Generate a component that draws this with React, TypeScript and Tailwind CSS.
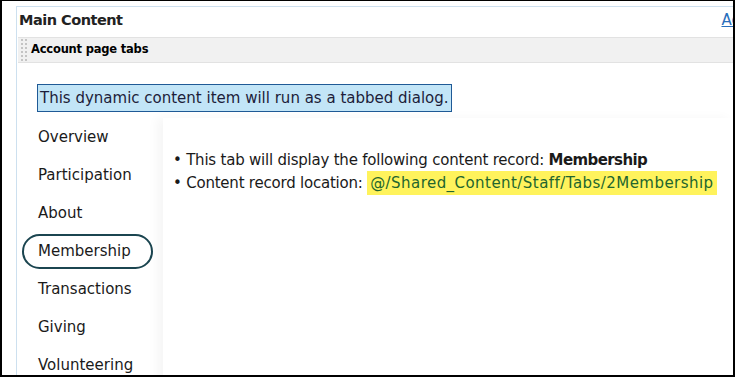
const tabs = ['Overview', 'Participation', 'About', 'Membership', 'Transactions', 'Giving', 'Volunteering'];

function DragHandle() {
  return (
    <div className="grid grid-cols-2 gap-x-[2px] gap-y-[2px] py-[3px]">
      {Array.from({ length: 12 }).map((_, i) => (
        <span key={i} className="block h-[2px] w-[2px] bg-[#c4c4c4]" />
      ))}
    </div>
  );
}

export default function App() {
  return (
    <div className="h-[377px] w-[735px] overflow-hidden border-2 border-t border-black bg-white font-['DejaVu_Sans',sans-serif] text-[#1a1a1a]">
      <div className="ml-[14px] mt-[5px] h-full border-l border-t border-[#cde0ef]">
        <div className="flex h-[30px] items-center justify-between overflow-hidden pb-[3px]">
          <h2 className="pl-[2px] text-[14.5px] font-bold tracking-[-0.5px] text-[#222]">Main Content</h2>
          <a className="mr-[-8px] text-[15px] text-[#2a6ebb] underline">Ad</a>
        </div>
        <div className="ml-px flex h-[26px] items-center gap-[4px] border-y border-[#e2e2e2] bg-[#f1f1f1] pl-[3px]">
          <DragHandle />
          <span className="text-[11.5px] font-bold tracking-[-0.2px] text-black">Account page tabs</span>
        </div>

        <div className="ml-[20px] mt-[21px] inline-block border border-[#1f5a96] bg-[#c2e5f7] px-[2px] py-[2px] text-[15px] leading-[22px] text-[#1d1d3a]">
          This dynamic content item will run as a tabbed dialog.
        </div>

        <div className="mt-[6px] flex">
          <ul className="w-[146px] shrink-0 pl-[5px]">
            {tabs.map((t) =>
              t === 'Membership' ? (
                <li key={t} className="flex h-[38px] items-center">
                  <span className="flex h-[35px] w-[131px] items-center rounded-full border-2 border-[#1b4550] pl-[14px] text-[15px]">
                    {t}
                  </span>
                </li>
              ) : (
                <li key={t} className="flex h-[38px] items-center pl-[16px] text-[15px]">
                  {t}
                </li>
              )
            )}
          </ul>
          <div className="flex-1 bg-white pl-[10px] pt-[31px] text-[15px] leading-[23px] tracking-[-0.22px] shadow-[-6px_0_10px_rgba(0,0,0,0.04)]">
            <p>
              • This tab will display the following content record: <b className="tracking-[-0.6px]">Membership</b>
            </p>
            <p>
              • Content record location:{' '}
              <span className="bg-[#fff35c] px-[3px] py-[3px] tracking-[0.45px] text-[#22652e]">@/Shared_Content/Staff/Tabs/2Membership</span>
            </p>
          </div>
        </div>
      </div>
    </div>
  );
}
